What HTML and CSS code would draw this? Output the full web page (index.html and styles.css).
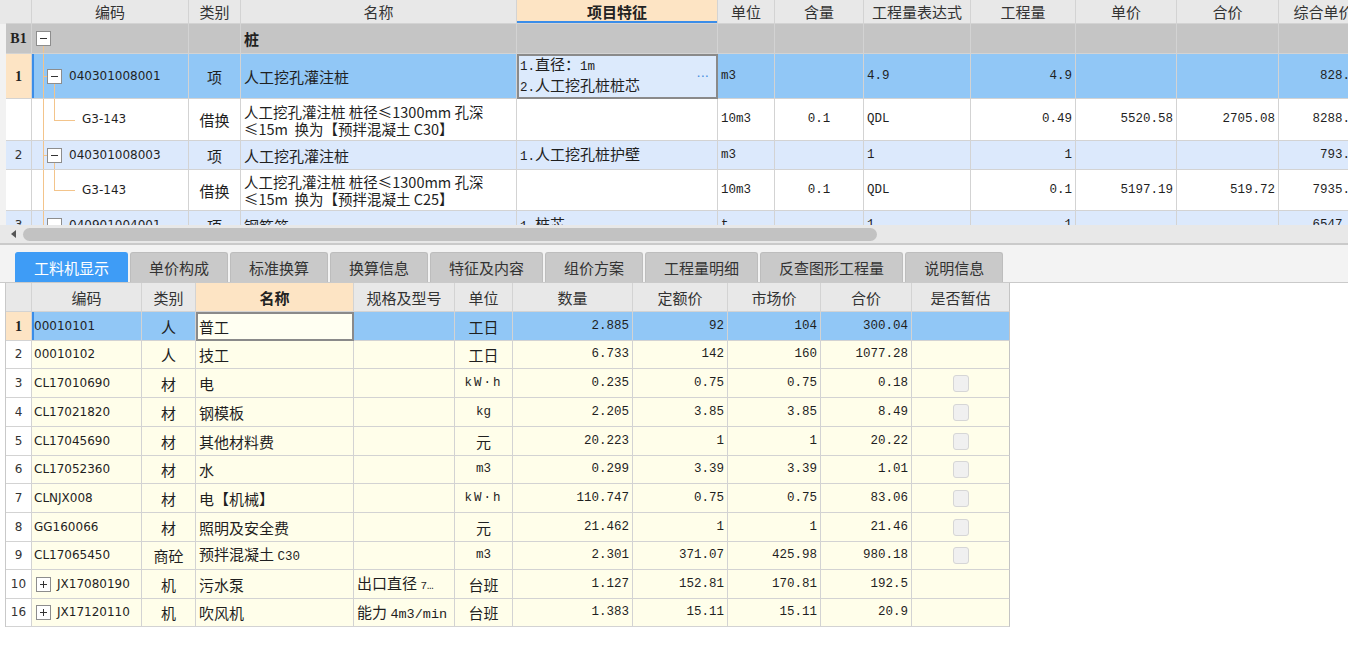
FILE: index.html
```html
<!DOCTYPE html>
<html lang="zh">
<head>
<meta charset="utf-8">
<title>工料机显示</title>
<link rel="stylesheet" href="styles.css">
</head>
<body>
<div class="top-pane">
  <div class="trow hdr h24">
    <div class="rn"></div><div>编码</div><div>类别</div><div>名称</div><div class="hl-col">项目特征</div><div>单位</div><div>含量</div><div>工程量表达式</div><div>工程量</div><div>单价</div><div>合价</div><div>综合单价</div>
  </div>
  <div class="trow grp h30">
    <div class="rn bold-rn">B1</div>
    <div class="tree t-b1"><span class="vl v-b1"></span><span class="tbox"></span></div>
    <div></div><div class="b">桩</div><div></div><div></div><div></div><div></div><div></div><div></div><div></div><div></div>
  </div>
  <div class="trow sel h45">
    <div class="rn peach bold-rn">1</div>
    <div class="tree t-item mark"><span class="vl v-full"></span><span class="hl h-item"></span><span class="vl2 v-item"></span><span class="tbox"></span><span class="code">040301008001</span></div>
    <div class="c">项</div>
    <div>人工挖孔灌注桩</div>
    <div class="focus feat"><span class="lines"><span class="m">1.</span>直径：<span class="m">1m</span><br><span class="m">2.</span>人工挖孔桩桩芯</span><span class="dots">···</span></div>
    <div class="m">m3</div><div></div><div class="m">4.9</div><div class="m r">4.9</div><div></div><div></div><div class="m r">828.41</div>
  </div>
  <div class="trow white h42">
    <div class="rn"></div>
    <div class="tree t-sub"><span class="vl v-full"></span><span class="vl2 v-sub"></span><span class="hl h-sub"></span><span class="code">G3-143</span></div>
    <div class="c">借换</div>
    <div class="wrap"><span>人工挖孔灌注桩 桩径≤1300mm 孔深<br>≤15m&nbsp;&nbsp;换为【预拌混凝土 C30】</span></div>
    <div></div>
    <div class="m">10m3</div><div class="m c">0.1</div><div class="m">QDL</div><div class="m r">0.49</div><div class="m r">5520.58</div><div class="m r">2705.08</div><div class="m r">8288.19</div>
  </div>
  <div class="trow lb h29">
    <div class="rn rn-n">2</div>
    <div class="tree t-item"><span class="vl v-full"></span><span class="hl h-item2"></span><span class="vl2 v-item2"></span><span class="tbox"></span><span class="code">040301008003</span></div>
    <div class="c">项</div>
    <div>人工挖孔灌注桩</div>
    <div><span><span class="m">1.</span>人工挖孔桩护壁</span></div>
    <div class="m">m3</div><div></div><div class="m">1</div><div class="m r">1</div><div></div><div></div><div class="m r">793.63</div>
  </div>
  <div class="trow white h41">
    <div class="rn"></div>
    <div class="tree t-sub"><span class="vl v-full"></span><span class="vl2 v-sub2"></span><span class="hl h-sub2"></span><span class="code">G3-143</span></div>
    <div class="c">借换</div>
    <div class="wrap"><span>人工挖孔灌注桩 桩径≤1300mm 孔深<br>≤15m&nbsp;&nbsp;换为【预拌混凝土 C25】</span></div>
    <div></div>
    <div class="m">10m3</div><div class="m c">0.1</div><div class="m">QDL</div><div class="m r">0.1</div><div class="m r">5197.19</div><div class="m r">519.72</div><div class="m r">7935.82</div>
  </div>
  <div class="trow lb h30">
    <div class="rn rn-n">3</div>
    <div class="tree t-item"><span class="vl v-full"></span><span class="hl h-item3"></span><span class="tbox"></span><span class="code">040901004001</span></div>
    <div class="c">项</div>
    <div>钢筋笼</div>
    <div><span><span class="m">1.</span>桩芯</span></div>
    <div class="m">t</div><div></div><div class="m">1</div><div class="m r">1</div><div></div><div></div><div class="m r">6547.20</div>
  </div>
</div>

<div class="hscroll"><span class="arrow"></span><span class="thumb"></span></div>

<div class="tabbar">
  <div class="tab active">工料机显示</div>
  <div class="tab">单价构成</div>
  <div class="tab">标准换算</div>
  <div class="tab">换算信息</div>
  <div class="tab">特征及内容</div>
  <div class="tab">组价方案</div>
  <div class="tab">工程量明细</div>
  <div class="tab">反查图形工程量</div>
  <div class="tab">说明信息</div>
</div>

<div class="bottom-pane">
  <div class="btable">
    <div class="brow bhdr">
      <div class="rn"></div><div>编码</div><div>类别</div><div class="hl-col2">名称</div><div>规格及型号</div><div>单位</div><div>数量</div><div>定额价</div><div>市场价</div><div>合价</div><div>是否暂估</div>
    </div>
    <div class="brow bsel r29">
      <div class="rn peach bold-rn">1</div><div class="code mark">00010101</div><div class="c">人</div><div class="focus2">普工</div><div></div><div class="c">工日</div><div class="m r">2.885</div><div class="m r">92</div><div class="m r">104</div><div class="m r">300.04</div><div></div>
    </div>
    <div class="brow r28">
      <div class="rn rn-n">2</div><div class="code">00010102</div><div class="c">人</div><div>技工</div><div></div><div class="c">工日</div><div class="m r">6.733</div><div class="m r">142</div><div class="m r">160</div><div class="m r">1077.28</div><div></div>
    </div>
    <div class="brow r29">
      <div class="rn rn-n">3</div><div class="code">CL17010690</div><div class="c">材</div><div>电</div><div></div><div class="m c kwh">kW·h</div><div class="m r">0.235</div><div class="m r">0.75</div><div class="m r">0.75</div><div class="m r">0.18</div><div class="c"><span class="cb"></span></div>
    </div>
    <div class="brow r29">
      <div class="rn rn-n">4</div><div class="code">CL17021820</div><div class="c">材</div><div>钢模板</div><div></div><div class="m c">kg</div><div class="m r">2.205</div><div class="m r">3.85</div><div class="m r">3.85</div><div class="m r">8.49</div><div class="c"><span class="cb"></span></div>
    </div>
    <div class="brow r29">
      <div class="rn rn-n">5</div><div class="code">CL17045690</div><div class="c">材</div><div>其他材料费</div><div></div><div class="c">元</div><div class="m r">20.223</div><div class="m r">1</div><div class="m r">1</div><div class="m r">20.22</div><div class="c"><span class="cb"></span></div>
    </div>
    <div class="brow r28">
      <div class="rn rn-n">6</div><div class="code">CL17052360</div><div class="c">材</div><div>水</div><div></div><div class="m c">m3</div><div class="m r">0.299</div><div class="m r">3.39</div><div class="m r">3.39</div><div class="m r">1.01</div><div class="c"><span class="cb"></span></div>
    </div>
    <div class="brow r29">
      <div class="rn rn-n">7</div><div class="code">CLNJX008</div><div class="c">材</div><div>电【机械】</div><div></div><div class="m c kwh">kW·h</div><div class="m r">110.747</div><div class="m r">0.75</div><div class="m r">0.75</div><div class="m r">83.06</div><div class="c"><span class="cb"></span></div>
    </div>
    <div class="brow r29">
      <div class="rn rn-n">8</div><div class="code">GG160066</div><div class="c">材</div><div>照明及安全费</div><div></div><div class="c">元</div><div class="m r">21.462</div><div class="m r">1</div><div class="m r">1</div><div class="m r">21.46</div><div class="c"><span class="cb"></span></div>
    </div>
    <div class="brow r28">
      <div class="rn rn-n">9</div><div class="code">CL17065450</div><div class="c">商砼</div><div><span>预拌混凝土 <span class="m">C30</span></span></div><div></div><div class="m c">m3</div><div class="m r">2.301</div><div class="m r">371.07</div><div class="m r">425.98</div><div class="m r">980.18</div><div class="c"><span class="cb"></span></div>
    </div>
    <div class="brow r29">
      <div class="rn rn-n">10</div><div class="code exp"><span class="tbox plus"></span>JX17080190</div><div class="c">机</div><div>污水泵</div><div><span>出口直径 <span class="m sm">7…</span></span></div><div class="c">台班</div><div class="m r">1.127</div><div class="m r">152.81</div><div class="m r">170.81</div><div class="m r">192.5</div><div></div>
    </div>
    <div class="brow r28">
      <div class="rn rn-n">16</div><div class="code exp"><span class="tbox plus"></span>JX17120110</div><div class="c">机</div><div>吹风机</div><div><span>能力 <span class="m wide">4m3/min</span></span></div><div class="c">台班</div><div class="m r">1.383</div><div class="m r">15.11</div><div class="m r">15.11</div><div class="m r">20.9</div><div></div>
    </div>
  </div>
</div>
</body>
</html>
```

FILE: styles.css
```css
html, body {
  margin: 0;
  padding: 0;
}
body {
  width: 1348px;
  height: 651px;
  overflow: hidden;
  background: #ffffff;
  font-family: "Noto Sans CJK SC", "Noto Sans", sans-serif;
  font-size: 15px;
  color: #1f1f1f;
}

/* ---------- top grid ---------- */
.top-pane {
  height: 225px;
  overflow: hidden;
  background: #f2f2f2;
}
.trow {
  display: grid;
  grid-template-columns: 26px 157px 52px 276px 201px 57px 89px 107px 105px 101px 102px 90px;
  padding-left: 6px;
  width: max-content;
  background: #f2f2f2;
}
.trow > div,
.brow > div {
  box-sizing: border-box;
  border-right: 1px solid #d3d3d3;
  border-bottom: 1px solid #d3d3d3;
  display: flex;
  align-items: center;
  padding: 0 3px;
  overflow: hidden;
  white-space: nowrap;
  position: relative;
  line-height: 17px;
}
.h24 { height: 24px; }
.h29 { height: 29px; }
.h30 { height: 30px; }
.h41 { height: 41px; }
.h42 { height: 42px; }
.h45 { height: 45px; }

.trow.hdr { background: #e8e8e8; }
.trow.hdr > div {
  justify-content: center;
  background: #e8e8e8;
  color: #333;
}
.trow.hdr > .hl-col {
  background: #fde4c4;
  font-weight: bold;
  color: #222;
  box-shadow: inset 0 -2px 0 #3b8de8;
}
.trow.grp > div { background: #c5c5c5; }
.trow.sel > div { background: #91c7f6; }
.trow.white > div { background: #ffffff; }
.trow.lb > div { background: #dce9fc; }

.rn {
  justify-content: center;
  padding: 0 !important;
}
.trow > .rn,
.brow > .rn { background: #ffffff; }
.trow.hdr > .rn { background: #e8e8e8; }
.trow > .rn.peach,
.brow > .rn.peach { background: #fde4c4; }
.bold-rn {
  font-family: "Liberation Serif", serif;
  font-weight: bold;
  font-size: 14px;
  color: #222;
}
.rn-n {
  font-family: "DejaVu Sans", sans-serif;
  font-size: 12px;
  color: #333;
}

.c { justify-content: center; }
.r { justify-content: flex-end; }
.b { font-weight: bold; }
.m {
  font-family: "Liberation Mono", monospace;
  font-size: 12.5px;
}
.m.sm { font-size: 11px; }
.m.wide { font-size: 13.5px; }
.kwh { letter-spacing: 2px; }
.code {
  font-family: "DejaVu Sans", sans-serif;
  font-size: 12px;
}
.wrap {
  white-space: normal !important;
  font-size: 14.5px;
}
.wrap > span { line-height: 17px; }
.mark { box-shadow: inset 2px 0 0 #3b8de8; }

/* focused cells */
.focus {
  outline: 2px solid #8a8a8a;
  outline-offset: -2px;
  background: #dceafc !important;
  justify-content: space-between;
}
.feat .lines { line-height: 17px; }
.dots {
  font-family: "DejaVu Sans", sans-serif;
  color: #4a8fe0;
  font-size: 13px;
  padding-right: 5px;
  letter-spacing: 0;
}
.focus2 {
  outline: 2px solid #8a8a8a;
  outline-offset: -2px;
  background: #fffff2 !important;
}

/* tree */
.tree { gap: 7px; }
.t-b1 { padding-left: 4px !important; }
.t-item { padding-left: 15px !important; }
.t-sub { padding-left: 50px !important; }
.vl, .vl2, .hl {
  position: absolute;
  background: #f3c48b;
}
.vl { left: 11px; width: 1px; }
.vl2 { left: 22px; width: 1px; }
.v-b1 { top: 22px; bottom: 0; }
.v-full { top: 0; bottom: 0; }
.v-item { top: 30px; bottom: 0; }
.v-item2 { top: 22px; bottom: 0; }
.v-sub { top: 0; height: 21px; }
.v-sub2 { top: 0; height: 20px; }
.hl { height: 1px; }
.h-item { left: 11px; width: 5px; top: 22px; }
.h-item2 { left: 11px; width: 5px; top: 14px; }
.h-item3 { left: 11px; width: 5px; top: 15px; }
.h-sub { left: 22px; width: 21px; top: 21px; }
.h-sub2 { left: 22px; width: 21px; top: 20px; }
.tbox {
  flex: none;
  width: 13px;
  height: 13px;
  border: 1px solid #8d8d8d;
  background: #ffffff;
  position: relative;
}
.tbox::before {
  content: "";
  position: absolute;
  left: 3px;
  right: 3px;
  top: 6px;
  height: 1px;
  background: #333;
}
.tbox.plus::after {
  content: "";
  position: absolute;
  top: 3px;
  bottom: 3px;
  left: 6px;
  width: 1px;
  background: #333;
}

/* ---------- scrollbar ---------- */
.hscroll {
  height: 18px;
  background: #e8e8e8;
  display: flex;
  align-items: center;
  gap: 7px;
  padding-left: 11px;
}
.arrow {
  width: 0;
  height: 0;
  border-right: 5px solid #555;
  border-top: 4px solid transparent;
  border-bottom: 4px solid transparent;
}
.thumb {
  width: 854px;
  height: 13px;
  border-radius: 7px;
  background: #c2c2c2;
}

/* ---------- tabs ---------- */
.tabbar {
  display: flex;
  align-items: flex-end;
  gap: 2px;
  height: 30px;
  padding: 7px 0 0 15px;
  background: #f3f3f3;
  border-top: 2px solid #cacaca;
  border-bottom: 1px solid #cacaca;
}
.tab {
  height: 30px;
  box-sizing: border-box;
  padding: 0 18px;
  display: flex;
  align-items: center;
  border: 1px solid #bdbdbd;
  border-bottom: none;
  border-radius: 3px 3px 0 0;
  background: #c9c9c9;
  color: #333;
}
.tab.active {
  background: #3e9cf6;
  border-color: #3e9cf6;
  color: #ffffff;
}

/* ---------- bottom grid ---------- */
.bottom-pane {
  padding-left: 5px;
}
.btable {
  width: max-content;
  border-left: 1px solid #c9c9c9;
}
.brow {
  display: grid;
  grid-template-columns: 26px 110px 54px 158px 101px 58px 120px 95px 93px 91px 98px;
}
.brow > div { background: #fffeea; }
.brow > div:last-child { border-right-color: #c4c4c4; }
.r28 { height: 28px; }
.r29 { height: 29px; }
.bhdr { height: 29px; }
.brow.bhdr > div {
  background: #e8e8e8;
  justify-content: center;
  color: #333;
}
.brow.bhdr > .hl-col2 {
  background: #fde4c4;
  font-weight: bold;
  color: #222;
}
.brow.bsel > div { background: #91c7f6; }
.brow.bsel > .rn.peach { background: #fde4c4; }
.brow > .code { padding-left: 2px; }
.brow > .exp {
  padding-left: 4px;
  gap: 6px;
}
.cb {
  width: 14px;
  height: 15px;
  border: 1px solid #d6d6d6;
  border-radius: 3px;
  background: #f0f0f0;
}
```
